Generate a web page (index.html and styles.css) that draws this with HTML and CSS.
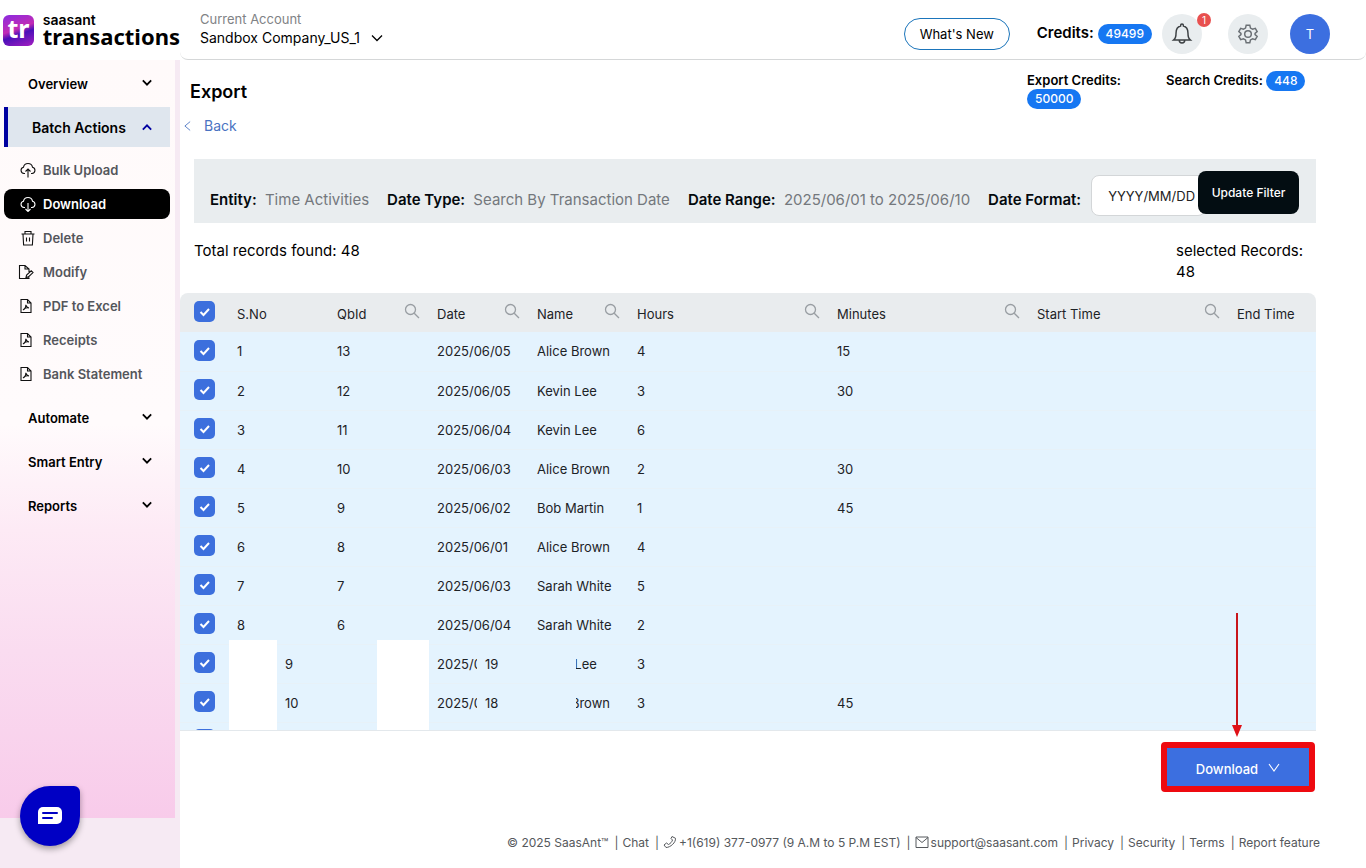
FILE: index.html
```
<!DOCTYPE html>
<html lang="en">
<head>
<meta charset="UTF-8">
<meta name="viewport" content="width=device-width, initial-scale=1.0">
<title>SaasAnt Transactions - Export</title>
<link rel="stylesheet" href="styles.css">
</head>
<body>

<!-- shared icons -->
<svg class="sprite" aria-hidden="true">
  <symbol id="i-down" viewBox="0 0 12 8"><path d="M1 1.500l5 5 5-5"/></symbol>
  <symbol id="i-caret" viewBox="0 0 12 10"><path d="M1 1l5 7 5-7"/></symbol>
  <symbol id="i-search" viewBox="0 0 16 16"><circle cx="6.500" cy="6.500" r="5"/><path d="M10.200 10.200L15 15"/></symbol>
  <symbol id="i-pdf" viewBox="0 0 16 16"><path d="M3 1.500h6.500L13 5v9.500H3zM9.500 1.500V5H13M5 12c2-1 3-3 2.800-5.200M5 12c1.500-2 3.500-2.600 6-2M7.800 7c.4 1.500 1.400 2.600 3.200 3"/></symbol>
</svg>

<header class="topbar">
  <a class="logo" href="#">
    <span class="logo-mark">tr</span>
    <span class="logo-text"><small>saasant</small><b>transactions</b></span>
  </a>
  <div class="topbar-main">
    <div class="account">
      <span class="account-label">Current Account</span>
      <button class="account-name">Sandbox Company_US_1 <svg class="icon chevron"><use href="#i-down"/></svg></button>
    </div>
    <button class="whats-new">What's New</button>
    <div class="credits">Credits: <span class="pill">49499</span></div>
    <button class="round bell" aria-label="Notifications">
      <svg class="icon" viewBox="0 0 24 24"><path d="M3 18.500h18c-2-1.500-2.500-3-2.500-7.500 0-4.500-2-7-5-7.700V2.500a1.500 1.500 0 0 0-3 0v.8c-3 .7-5 3.200-5 7.700 0 4.500-.5 6-2.500 7.500zM9 18.500c0 4.500 6 4.500 6 0"/></svg>
      <span class="count">1</span>
    </button>
    <button class="round gear" aria-label="Settings">
      <svg class="icon" viewBox="0 0 24 24"><path d="M10 2.500h4l.7 3 2.300 1.300 3-1 2 3.500-2.300 2v1.400l2.300 2-2 3.500-3-1-2.300 1.300-.7 3h-4l-.7-3L7 17.200l-3 1-2-3.500 2.300-2v-1.400L2 9.300l2-3.500 3 1 2.300-1.300z"/><circle cx="12" cy="12" r="3.600"/></svg>
    </button>
    <button class="round avatar">T</button>
  </div>
</header>

<div class="layout">
  <aside class="sidebar">
    <nav class="menu">
      <a class="group" href="#">Overview <svg class="icon"><use href="#i-down"/></svg></a>
      <a class="group open" href="#">Batch Actions <svg class="icon"><use href="#i-down"/></svg></a>
      <div class="sub">
        <a href="#"><svg class="icon" viewBox="0 0 16 16"><path d="M5 11.500H4a3.200 3.200 0 0 1-.5-6.300 4.600 4.600 0 0 1 9 0 3.200 3.200 0 0 1-.5 6.300h-1M8 15.500V7M5.500 9.500L8 7l2.500 2.500"/></svg>Bulk Upload</a>
        <a class="active" href="#"><svg class="icon" viewBox="0 0 16 16"><path d="M5 11.500H4a3.200 3.200 0 0 1-.5-6.300 4.600 4.600 0 0 1 9 0 3.200 3.200 0 0 1-.5 6.300h-1M8 7v8.500M5.500 13L8 15.500l2.500-2.500"/></svg>Download</a>
        <a href="#"><svg class="icon" viewBox="0 0 16 16"><path d="M1.500 4h13M5 4V1.500h6V4M3 4l.6 11h8.800L13 4M6.500 7.500v4M9.500 7.500v4"/></svg>Delete</a>
        <a href="#"><svg class="icon wide" viewBox="0 0 16 16"><path d="M11 13.500v1H1.500v-13H7L11 5v3M7 1.500V5h4M8 13.500l.6-2.500 4.600-4.200 1.800 1.800-4.600 4.300z"/></svg>Modify</a>
        <a href="#"><svg class="icon doc"><use href="#i-pdf"/></svg>PDF to Excel</a>
        <a href="#"><svg class="icon doc"><use href="#i-pdf"/></svg>Receipts</a>
        <a href="#"><svg class="icon doc"><use href="#i-pdf"/></svg>Bank Statement</a>
      </div>
      <a class="group" href="#">Automate <svg class="icon"><use href="#i-down"/></svg></a>
      <a class="group" href="#">Smart Entry <svg class="icon"><use href="#i-down"/></svg></a>
      <a class="group" href="#">Reports <svg class="icon"><use href="#i-down"/></svg></a>
    </nav>
  </aside>

  <main class="content">
    <div class="page-head">
      <div class="page-title">
        <h1>Export</h1>
        <a class="back" href="#"><svg class="icon" viewBox="0 0 8 12"><path d="M7 1L1 6l6 5"/></svg>Back</a>
      </div>
      <div class="credit export">Export Credits: <span class="pill">50000</span></div>
      <div class="credit search">Search Credits: <span class="pill">448</span></div>
    </div>

    <form class="filters">
      <span class="filter"><b>Entity:</b> Time Activities</span>
      <span class="filter"><b>Date Type:</b> Search By Transaction Date</span>
      <span class="filter"><b>Date Range:</b> 2025/06/01 to 2025/06/10</span>
      <label class="filter" for="dateFormat"><b>Date Format:</b></label>
      <select id="dateFormat"><option>YYYY/MM/DD</option><option>MM/DD/YYYY</option></select>
      <button type="button" class="update">Update Filter</button>
    </form>

    <div class="totals">
      <p>Total records found: 48</p>
      <p class="selected">selected Records: 48</p>
    </div>

    <div class="table-wrap">
      <table>
        <colgroup>
          <col class="c-check"><col class="c-s"><col class="c-s"><col class="c-s"><col class="c-s"><col class="c-l"><col class="c-l"><col class="c-l"><col class="c-l">
        </colgroup>
        <thead>
          <tr>
            <th><input type="checkbox" aria-label="Select all" checked></th>
            <th>S.No</th>
            <th>QbId <svg class="icon"><use href="#i-search"/></svg></th>
            <th>Date <svg class="icon"><use href="#i-search"/></svg></th>
            <th>Name <svg class="icon"><use href="#i-search"/></svg></th>
            <th>Hours <svg class="icon"><use href="#i-search"/></svg></th>
            <th>Minutes <svg class="icon"><use href="#i-search"/></svg></th>
            <th>Start Time <svg class="icon"><use href="#i-search"/></svg></th>
            <th>End Time</th>
          </tr>
        </thead>
        <tbody id="rows"></tbody>
      </table>
      <span class="mask mask-sno"></span>
      <span class="mask mask-qbid"></span>
    </div>

    <div class="actions">
      <svg class="arrow" viewBox="0 0 10 125"><path class="shaft" d="M5 1v114"/><path class="head" d="M0 113h10l-5 12z"/></svg>
      <button class="download">Download <svg class="icon"><use href="#i-caret"/></svg></button>
    </div>

    <footer class="footer">
      <span>© 2025 SaasAnt™</span>
      <a href="#">Chat</a>
      <a href="#"><svg class="icon" viewBox="0 0 14 14"><path d="M9 1.500l3.500 1.800c.5 4-5 9.200-9.500 9.200L1 10l2.500-2 2 1.500c2-1 3.500-2.700 4-4.500L8 3.500z"/></svg>+1(619) 377-0977 (9 A.M to 5 P.M EST)</a>
      <a href="#"><svg class="icon" viewBox="0 0 14 14"><path d="M1 2h12v10.500H1zM1 2.500l6 5 6-5"/></svg>support@saasant.com</a>
      <a href="#">Privacy</a>
      <a href="#">Security</a>
      <a href="#">Terms</a>
      <a href="#">Report feature</a>
    </footer>
  </main>
</div>

<button class="chat" aria-label="Open chat">
  <svg viewBox="0 0 24 18"><path d="M5 0h14a5 5 0 0 1 5 5v7a5 5 0 0 1-5 5H0V5a5 5 0 0 1 5-5z" fill="#fff"/><path d="M5 6h14M5 11h9" stroke="#0000c4" stroke-width="2" stroke-linecap="round"/></svg>
</button>

<script>
const records = [
  {no:1, id:13, date:"2025/06/05", name:"Alice Brown", hours:4, minutes:15},
  {no:2, id:12, date:"2025/06/05", name:"Kevin Lee", hours:3, minutes:30},
  {no:3, id:11, date:"2025/06/04", name:"Kevin Lee", hours:6},
  {no:4, id:10, date:"2025/06/03", name:"Alice Brown", hours:2, minutes:30},
  {no:5, id:9, date:"2025/06/02", name:"Bob Martin", hours:1, minutes:45},
  {no:6, id:8, date:"2025/06/01", name:"Alice Brown", hours:4},
  {no:7, id:7, date:"2025/06/03", name:"Sarah White", hours:5},
  {no:8, id:6, date:"2025/06/04", name:"Sarah White", hours:2},
  {no:9, id:19, date:"2025/0", name:"Kevin Lee", hours:3, moved:true},
  {no:10, id:18, date:"2025/0", name:"Alice Brown", hours:3, minutes:45, moved:true},
  {no:"", id:"", date:"", name:"", hours:""},
];

// in moved rows the id floats over the date and name cells
document.getElementById('rows').innerHTML = records.map(r => `
  <tr class="${r.moved ? 'moved' : ''}">
    <td><input type="checkbox" aria-label="Select row ${r.no}" checked></td>
    <td>${r.no}</td>
    <td>${r.moved ? '' : r.id}</td>
    <td>${r.moved ? `<span class="cut">${r.date}</span><span class="floating">${r.id}</span>` : r.date}</td>
    <td>${r.name}</td>
    <td>${r.hours}</td>
    <td>${r.minutes || ''}</td>
    <td></td>
    <td></td>
  </tr>`).join('');
</script>
</body>
</html>
```
FILE: styles.css
```
* {
  box-sizing: border-box;
}
body {
  font-family: Inter, "Liberation Sans", sans-serif;
  font-size: 15px;
  margin: 0;
  min-height: 100vh;
  display: flex;
  flex-direction: column;
  background: #fff;
  color: #000;
}
button, select, input {
  font-family: inherit;
  margin: 0;
}
button {
  cursor: pointer;
}
a {
  color: inherit;
  text-decoration: none;
}
.sprite {
  display: none;
}
.icon {
  fill: none;
  stroke: currentColor;
  stroke-width: 1.3;
  flex: none;
}

/* top bar */
.topbar {
  display: flex;
  height: 60px;
}
.logo {
  width: 180px;
  flex: none;
  display: flex;
  align-items: center;
  gap: 9px;
  padding-left: 3px;
}
.logo-mark {
  width: 32px;
  height: 31px;
  border-radius: 6px;
  background: linear-gradient(160deg, #8a2be0 0%, #c22bb4 45%, #4a0fb8 60%, #a61fc0 100%);
  color: #fff;
  font: bold 25px/27px "Noto Sans", sans-serif;
  text-align: center;
}
.logo-text small {
  display: block;
  font: 600 14px/12px Inter, sans-serif;
}
.logo-text b {
  display: block;
  font: bold 22px/20px "Noto Sans", sans-serif;
}
.topbar-main {
  flex: 1;
  display: flex;
  align-items: center;
  border-bottom: 1px solid #d5d7d8;
  border-radius: 0 0 8px 8px;
  padding: 8px 36px 0 20px;
}
.account {
  flex: 1;
  align-self: flex-start;
}
.account-label {
  display: block;
  font-size: 13px;
  line-height: 22px;
  color: #808285;
}
.account-name {
  display: flex;
  align-items: center;
  gap: 11px;
  border: none;
  background: none;
  padding: 0;
  font-size: 14px;
  line-height: 16px;
}
.chevron {
  width: 12px;
  height: 8px;
}
.whats-new {
  width: 106px;
  height: 32px;
  border: 1px solid #1b75bb;
  border-radius: 16px;
  background: #fff;
  font-size: 13px;
  padding: 0;
}
.credits {
  font-size: 15px;
  font-weight: 600;
  margin: 0 10px 0 27px;
}
.pill {
  display: inline-block;
  background: #1677f2;
  color: #fff;
  border-radius: 10px;
  padding: 0 8px;
  font-size: 12px;
  line-height: 20px;
  font-weight: 500;
}
.round {
  position: relative;
  width: 40px;
  height: 40px;
  border: none;
  border-radius: 50%;
  padding: 0;
  background: #e9edef;
  color: #3c4043;
}
.round .icon {
  width: 22px;
  height: 22px;
  vertical-align: middle;
}
.bell .icon {
  stroke-width: 1.6;
}
.gear {
  margin: 0 22px 0 26px;
  color: #6b7075;
}
.gear .icon {
  stroke-width: 1.6;
}
.count {
  position: absolute;
  top: -1px;
  right: -9px;
  width: 14px;
  height: 14px;
  border-radius: 50%;
  background: #e8504f;
  color: #fff;
  font-size: 10px;
  line-height: 14px;
}
.avatar {
  background: #3c6fe0;
  color: #fff;
  font-size: 13px;
}

/* sidebar */
.layout {
  flex: 1;
  display: flex;
}
.sidebar {
  width: 180px;
  flex: none;
  background: #f6eaf3;
  padding: 0 5px 50px 0;
}
.menu {
  height: 100%;
  padding: 2px 5px 0 4px;
  background: linear-gradient(#fffafa 0, #fffbfc 48%, #fdeaf5 62%, #fadcf0 78%, #f8cbea 100%);
}
.group {
  display: flex;
  justify-content: space-between;
  align-items: center;
  height: 44px;
  padding: 0 18px 0 24px;
  font-size: 13px;
  font-weight: 600;
}
.group .icon {
  width: 10px;
  height: 7px;
  margin-bottom: 4px;
  stroke-width: 2.2;
}
.group.open {
  height: 40px;
  margin-top: 1px;
  background: #dfe6ee;
  border-left: 4px solid #0000a0;
  font-size: 14px;
}
.group.open .icon {
  margin-bottom: 0;
  color: #0000a0;
  transform: rotate(180deg);
}
.sub {
  display: flex;
  flex-direction: column;
  gap: 4px;
  padding: 8px 0 7px;
}
.sub a {
  display: flex;
  align-items: center;
  gap: 7px;
  height: 30px;
  padding-left: 16px;
  border-radius: 8px;
  font-size: 13px;
  font-weight: 600;
  color: #54565b;
}
.sub .icon {
  width: 16px;
  height: 16px;
  color: #111;
  stroke-width: 1.1;
}
.sub .doc {
  margin: 0 2px 0 -2px;
}
.sub .wide {
  margin: 0 2px 0 -2px;
}
.sub .active, .sub .active .icon {
  background: #000;
  color: #fff;
}

/* page */
.content {
  flex: 1;
  min-width: 0;
  display: flex;
  flex-direction: column;
  padding-right: 50px;
}
.page-head {
  display: flex;
  height: 99px;
  padding-top: 11px;
}
.page-title {
  flex: 1;
}
.page-title h1 {
  margin: 9px 0 13px 10px;
  font-size: 18px;
  line-height: 24px;
  font-weight: 600;
}
.back {
  display: inline-flex;
  align-items: center;
  gap: 13px;
  margin-left: 4px;
  font-size: 14px;
  line-height: 18px;
  color: #4a73c2;
}
.back .icon {
  width: 7px;
  height: 12px;
  stroke-width: 1;
}
.credit {
  font-size: 13px;
  font-weight: 600;
  line-height: 18px;
}
.credit.export {
  width: 139px;
  padding-right: 30px;
}
.credit.search {
  width: 150px;
}
.filters {
  display: flex;
  align-items: center;
  gap: 18px;
  height: 64px;
  margin-left: 14px;
  padding: 0 17px 0 16px;
  background: #e9edef;
  white-space: nowrap;
}
.filter {
  color: #74787d;
  padding-top: 16px;
}
.filter b {
  font-weight: 600;
  color: #04090d;
  margin-right: 4px;
}
.filters select {
  appearance: none;
  flex: 1;
  min-width: 0;
  height: 41px;
  margin: 9px -26px 0 -12px;
  padding: 0 0 0 16px;
  border: 1px solid #d3d6d8;
  border-radius: 8px;
  background: #fff;
  color: #222;
  font-size: 13px;
}
.update {
  position: relative;
  width: 101px;
  height: 43px;
  margin-top: 3px;
  border: none;
  border-radius: 8px;
  background: #030d12;
  color: #fff;
  font-size: 12px;
  font-weight: 500;
  padding: 0;
}
.totals {
  display: flex;
  justify-content: space-between;
  height: 70px;
  padding: 17px 0 0 14px;
}
.totals p {
  margin: 0;
  line-height: 21px;
}
.totals .selected {
  width: 140px;
}

/* records table */
.table-wrap {
  position: relative;
  height: 438px;
  overflow: hidden;
  border-bottom: 1px solid #e3e8ec;
  border-radius: 8px 8px 0 0;
}
table {
  table-layout: fixed;
  width: 1249px;
  border-collapse: collapse;
  font-size: 13px;
  color: #1d2226;
}
.c-check {
  width: 49px;
}
.c-s {
  width: 100px;
}
.c-l {
  width: 200px;
}
th, td {
  position: relative;
  height: 39px;
  padding: 0 8px;
  text-align: left;
  font-weight: 400;
  white-space: nowrap;
}
th {
  background: #e9ecee;
  padding-top: 3px;
}
th .icon {
  float: right;
  width: 16px;
  height: 16px;
  margin-right: 1px;
  margin-top: -3px;
  color: #999ea3;
}
td {
  background: #e4f3fe;
  border-bottom: 1px solid #e7f1f8;
}
th:first-child, td:first-child {
  padding: 0 0 2px 14px;
}
tr:last-child td:first-child {
  vertical-align: top;
  padding-top: 6px;
}
input[type="checkbox"] {
  appearance: none;
  display: block;
  width: 21px;
  height: 21px;
  border-radius: 5px;
  background: #3c6fdd url("data:image/svg+xml,%3Csvg xmlns='http://www.w3.org/2000/svg' viewBox='0 0 21 21'%3E%3Cpath d='M6.500 11l3 3 5.500-6' fill='none' stroke='white' stroke-width='2'/%3E%3C/svg%3E");
}
.moved td:nth-child(2) {
  padding-left: 56px;
}
.cut {
  display: block;
  width: 40px;
  overflow: hidden;
}
.floating {
  position: absolute;
  z-index: 1;
  left: 48px;
  top: 0;
  width: 99px;
  padding-left: 8px;
  line-height: 38px;
  background: #e4f3fe;
}
.mask {
  position: absolute;
  z-index: 2;
  top: 347px;
  bottom: 0;
  background: #fff;
}
.mask-sno {
  left: 49px;
  width: 48px;
}
.mask-qbid {
  left: 197px;
  width: 52px;
}

/* download button */
.actions {
  position: relative;
  display: flex;
  justify-content: flex-end;
  padding: 11px 1px 0 0;
}
.download {
  display: flex;
  align-items: center;
  justify-content: center;
  gap: 10px;
  width: 154px;
  height: 50px;
  border: 6px solid #ee0a10;
  border-radius: 4px;
  background: #3c6fe0;
  color: #fff;
  font-size: 13px;
  font-weight: 500;
  padding: 4px 0 0;
}
.download .icon {
  width: 12px;
  height: 10px;
  margin-bottom: 2px;
  stroke-width: 1.1;
}
.arrow {
  position: absolute;
  z-index: 3;
  right: 74px;
  bottom: 55px;
  width: 10px;
  height: 125px;
}
.shaft {
  stroke: #c8151b;
  stroke-width: 2;
}
.head {
  fill: #e01016;
}

.footer {
  display: flex;
  justify-content: flex-end;
  margin-top: auto;
  margin-right: -4px;
  padding-bottom: 15px;
  font-size: 12px;
  line-height: 20px;
  color: #55585c;
  white-space: nowrap;
}
.footer a::before {
  content: "|";
  margin: 0 4px 0 6px;
}
.footer .icon {
  width: 14px;
  height: 14px;
  vertical-align: -2px;
  margin-right: 2px;
  stroke-width: 1;
}

/* chat bubble */
.chat {
  position: fixed;
  left: 20px;
  bottom: 22px;
  width: 60px;
  height: 60px;
  border: none;
  border-radius: 30px 6px 30px 30px;
  background: #0000c4;
  box-shadow: 0 3px 6px rgba(0, 0, 0, .35);
  padding: 0;
}
.chat svg {
  width: 24px;
  height: 18px;
  vertical-align: middle;
}
```
